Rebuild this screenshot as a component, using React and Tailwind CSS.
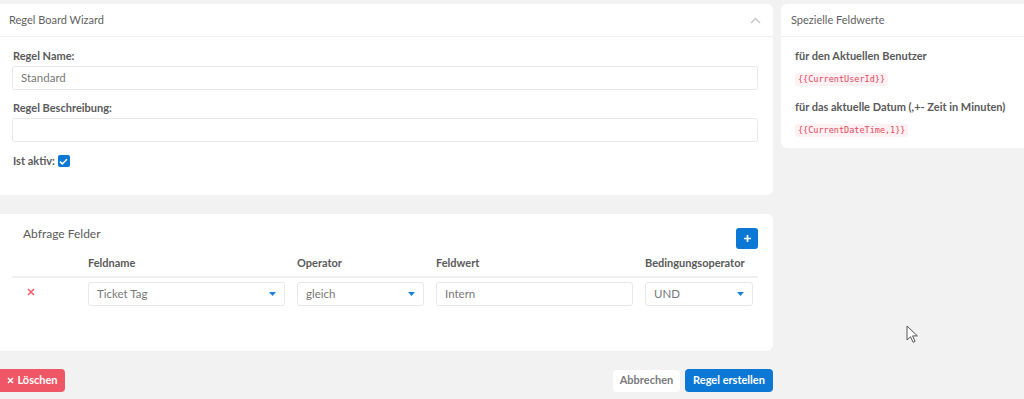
import React from 'react';

const font = { fontFamily: 'Lato, "Noto Sans", sans-serif' };

function Caret() {
  return (
    <svg width="7" height="4" viewBox="0 0 7 4" className="shrink-0">
      <path d="M0 0h7L3.5 4z" fill="#1a7fd6" />
    </svg>
  );
}

function SelectBox({ value }) {
  return (
    <div className="flex h-[24px] items-center justify-between rounded-[3px] border border-[#e8e8e8] bg-white pl-[8px] pr-[8px] text-[11.5px] text-[#777]">
      <span>{value}</span>
      <Caret />
    </div>
  );
}

function TextBox({ value }) {
  return (
    <div className="flex h-[24px] items-center rounded-[3px] border border-[#e8e8e8] bg-white pl-[8px] text-[11.5px] text-[#777]">
      {value}
    </div>
  );
}

export default function App() {
  return (
    <div style={font} className="relative h-[399px] w-[1024px] overflow-hidden bg-[#f2f2f2]">
      <div className="flex gap-[8px] pt-[4px]">
        {/* left column */}
        <div className="w-[773px] shrink-0">
          <div className="h-[191px] rounded-r-[6px] bg-white">
            <div className="flex h-[33px] items-center justify-between border-b border-[#f0f0f0] pl-[9px] pr-[12px]">
              <span className="text-[11px] text-[#5f5f5f]">Regel Board Wizard</span>
              <svg width="11" height="7" viewBox="0 0 11 7">
                <path d="M1 6l4.5-4.5L10 6" fill="none" stroke="#c4c4c4" strokeWidth="1.3" />
              </svg>
            </div>
            <div className="pl-[12px] pr-[15px] pt-[11px]">
              <div className="pl-[1px] text-[11px] font-bold leading-[16px] text-[#5a5a5a]">Regel Name:</div>
              <div className="mt-[2px]">
                <TextBox value="Standard" />
              </div>
              <div className="mt-[10px] pl-[1px] text-[11px] font-bold leading-[16px] text-[#5a5a5a]">Regel Beschreibung:</div>
              <div className="mt-[2px]">
                <TextBox value="" />
              </div>
              <div className="mt-[11px] flex items-center gap-[3px] pl-[1px] text-[11px] font-bold leading-[16px] text-[#5a5a5a]">
                <span>Ist aktiv:</span>
                <span className="flex h-[12px] w-[12px] items-center justify-center rounded-[2px] bg-[#0b78d5]">
                  <svg width="9" height="7" viewBox="0 0 9 7">
                    <path d="M1 3.6l2.3 2.2L8 1.2" fill="none" stroke="#fff" strokeWidth="1.6" />
                  </svg>
                </span>
              </div>
            </div>
          </div>

          <div className="mt-[19px] h-[137px] rounded-r-[6px] bg-white pl-[12px] pr-[15px]">
            <div className="flex items-start justify-between pt-[12px]">
              <span className="pl-[11px] text-[12px] leading-[16px] text-[#5a5a5a]">Abfrage Felder</span>
              <button className="mt-[2px] flex h-[21px] w-[22px] items-center justify-center rounded-[3px] bg-[#0b78d5]">
                <svg width="9" height="9" viewBox="0 0 9 9">
                  <path d="M4.5 1v7M1 4.5h7" stroke="#fff" strokeWidth="1.6" />
                </svg>
              </button>
            </div>
            <div className="grid grid-cols-[64px_197px_127px_197px_108px] gap-x-[12px] border-b-2 border-[#f0f0f0] pb-[5px] pt-[6px] text-[11px] font-bold leading-[16px] text-[#5a5a5a]">
              <span></span>
              <span>Feldname</span>
              <span>Operator</span>
              <span>Feldwert</span>
              <span>Bedingungsoperator</span>
            </div>
            <div className="mt-[4px] grid grid-cols-[64px_197px_127px_197px_108px] gap-x-[12px]">
              <div className="flex h-[24px] items-start pl-[15px] pt-[6px]">
                <svg width="8" height="8" viewBox="0 0 8 8">
                  <path d="M1 1l6 6M7 1L1 7" stroke="#ef5a68" strokeWidth="1.5" />
                </svg>
              </div>
              <SelectBox value="Ticket Tag" />
              <SelectBox value="gleich" />
              <TextBox value="Intern" />
              <SelectBox value="UND" />
            </div>
          </div>

          <div className="mt-[18px] flex items-center justify-between">
            <button className="flex h-[23px] w-[65px] items-center justify-center gap-[3px] rounded-r-[4px] bg-[#ef5766] text-[11px] font-bold text-white">
              <svg width="7" height="7" viewBox="0 0 7 7">
                <path d="M1 1l5 5M6 1L1 6" stroke="#fff" strokeWidth="1.5" />
              </svg>
              Löschen
            </button>
            <div className="flex items-center gap-[5px]">
              <button className="flex h-[22px] w-[67px] items-center justify-center rounded-[4px] bg-white text-[11px] font-bold text-[#7a7a7a]">
                Abbrechen
              </button>
              <button className="flex h-[23px] w-[88px] items-center justify-center rounded-[4px] bg-[#0b78d5] text-[11px] font-bold text-white">
                Regel erstellen
              </button>
            </div>
          </div>
        </div>

        {/* right column */}
        <div className="min-w-0 flex-1">
          <div className="h-[144px] rounded-l-[6px] bg-white">
            <div className="flex h-[33px] items-center border-b border-[#f0f0f0] pl-[10px]">
              <span className="text-[11px] text-[#5f5f5f]">Spezielle Feldwerte</span>
            </div>
            <div className="pl-[14px] pt-[11px]">
              <div className="whitespace-nowrap text-[11px] font-bold leading-[16px] text-[#5a5a5a]">für den Aktuellen Benutzer</div>
              <div className="mt-[6px] inline-block rounded-[3px] bg-[#fdf1f3] px-[3px] font-['DejaVu_Sans_Mono',monospace] text-[8.5px] leading-[13px] text-[#e3465a]">
                {'{{CurrentUserId}}'}
              </div>
              <div className="mt-[11px] whitespace-nowrap text-[11px] font-bold leading-[16px] text-[#5a5a5a]">für das aktuelle Datum (,+- Zeit in Minuten)</div>
              <div className="mt-[5px] inline-block rounded-[3px] bg-[#fdf1f3] px-[3px] font-['DejaVu_Sans_Mono',monospace] text-[8.5px] leading-[13px] text-[#e3465a]">
                {'{{CurrentDateTime,1}}'}
              </div>
            </div>
          </div>
        </div>
      </div>

      {/* mouse cursor */}
      <svg className="absolute left-[906px] top-[325px]" width="13" height="19" viewBox="0 0 13 19">
        <path d="M1 1v14l3.5-3.3 2.6 5.6 2-0.9-2.5-5.5h4.8z" fill="#fff" stroke="#555" strokeWidth="1" strokeLinejoin="round" />
      </svg>
    </div>
  );
}
